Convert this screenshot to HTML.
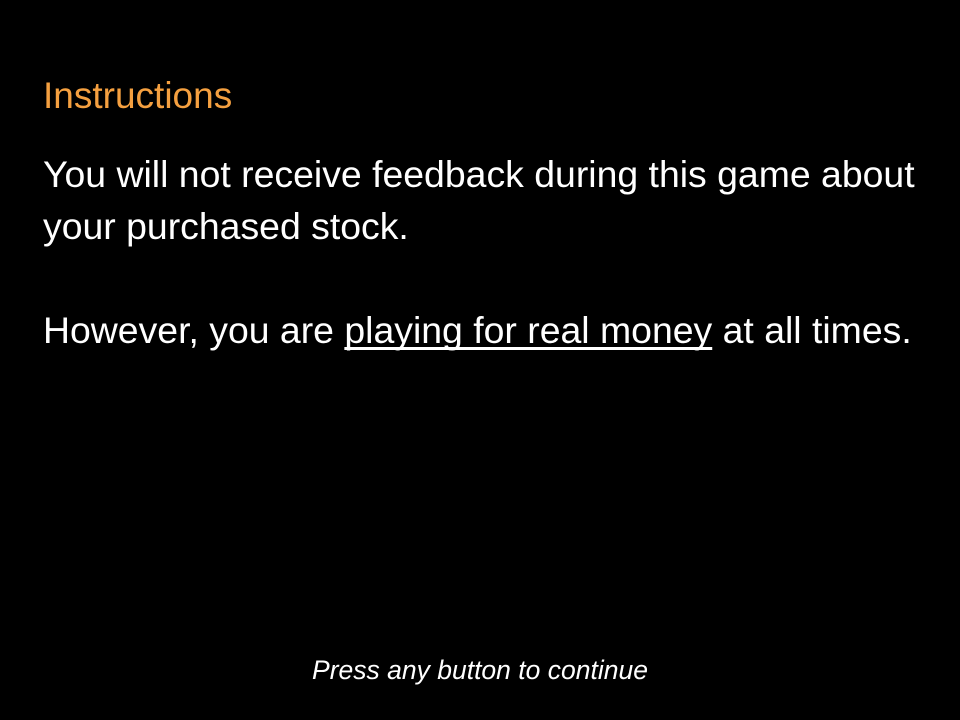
<!DOCTYPE html>
<html><head><style>
html,body{margin:0;padding:0;background:#000;width:960px;height:720px;overflow:hidden}
body{font-family:"Liberation Sans",sans-serif;color:#fff;position:relative}
.t{position:absolute;left:43px;top:76px;font-size:37px;color:#f5a040;line-height:40px}
.p{position:absolute;left:43px;font-size:37.4px;line-height:40px;white-space:nowrap}
u{text-decoration-skip-ink:none;text-underline-offset:4px}
.f{position:absolute;left:0;width:960px;text-align:center;top:655px;font-size:26.5px;font-style:italic;line-height:30px}
</style></head><body>
<div class="t">Instructions</div>
<div class="p" style="top:154px">You will not receive feedback during this game about</div>
<div class="p" style="top:206px">your purchased stock.</div>
<div class="p" style="top:310px">However, you are <u>playing for real money</u> at all times.</div>
<div class="f">Press any button to continue</div>
</body></html>
